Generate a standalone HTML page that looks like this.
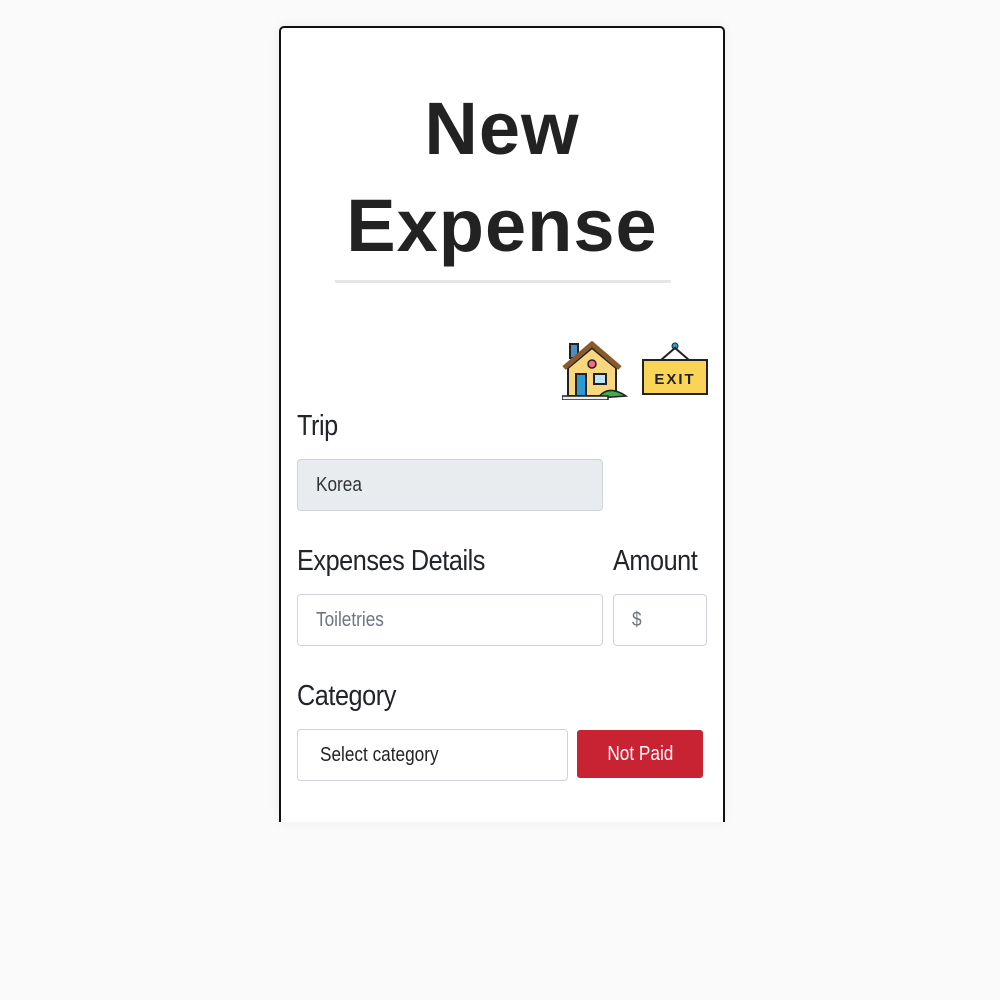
<!DOCTYPE html>
<html><head><style>
body{margin:0;background:#fafafa;width:1000px;height:1000px;position:relative;overflow:hidden;font-family:"Liberation Sans Narrow","Liberation Sans",sans-serif;color:#212529}
.card{position:absolute;left:279px;top:26px;width:442px;height:794px;background:#fff;border:2px solid #111;border-bottom:none;border-radius:5px 5px 0 0;box-shadow:0 0 12px rgba(0,0,0,.06)}
.t{position:absolute;left:0;width:100%;text-align:center;font-family:"Liberation Sans",sans-serif;font-weight:bold;font-size:74px;color:#222;letter-spacing:1px}
.hr{position:absolute;left:54px;width:336px;top:252px;height:3px;background:#e6e6e6}
.lab{position:absolute;font-size:29px;letter-spacing:-0.5px;transform:scaleX(.87);transform-origin:left;white-space:nowrap}
.in{position:absolute;box-sizing:border-box;border:1px solid #ced4da;border-radius:4px;font-size:20px;padding-left:18px;line-height:50px;height:52px;color:#6c757d}
.in span,.btn span{display:inline-block;transform:scaleX(.86);transform-origin:left;white-space:nowrap}
.btn{position:absolute;background:#c82333;color:#fff;border-radius:3px;font-size:20px;text-align:center;line-height:48px}
.btn span{transform-origin:center}
</style></head><body>
<div class="card">
<div class="t" style="top:58px">New</div>
<div class="t" style="top:155px">Expense</div>
<div class="hr"></div>
<svg style="position:absolute;left:281px;top:312px" width="66" height="60" viewBox="0 0 66 60">
<rect x="8" y="4" width="8" height="14" fill="#4a8fc0" stroke="#222" stroke-width="2"/>
<polygon points="6,28 30,8 54,28 54,56 6,56" fill="#f9d77e" stroke="#222" stroke-width="2"/>
<polyline points="2,28 30,4 58,28" fill="none" stroke="#8a5a2b" stroke-width="5"/>
<circle cx="30" cy="24" r="4" fill="#f06b8c" stroke="#222" stroke-width="1.5"/>
<rect x="14" y="34" width="10" height="22" fill="#2d9ad6" stroke="#222" stroke-width="2"/>
<rect x="32" y="34" width="12" height="10" fill="#bfe4f7" stroke="#222" stroke-width="2"/>
<path d="M36 58 Q46 44 64 56 Z" fill="#3fae49" stroke="#222" stroke-width="1.5"/>
<rect x="0" y="56" width="46" height="4" fill="#eee" stroke="#222" stroke-width="1.5"/>
</svg>
<svg style="position:absolute;left:360px;top:314px" width="68" height="56" viewBox="0 0 68 56">
<circle cx="34" cy="4" r="3" fill="#2d9ad6" stroke="#222"/>
<polyline points="20,18 34,6 48,18" fill="none" stroke="#222" stroke-width="2"/>
<rect x="2" y="18" width="64" height="34" fill="#f9d456" stroke="#222" stroke-width="2"/>
<text x="34" y="42" text-anchor="middle" font-family="Liberation Sans" font-weight="bold" font-size="15" letter-spacing="2" fill="#222">EXIT</text>
</svg>
<div class="lab" style="left:16px;top:382px">Trip</div>
<div class="in" style="left:16px;top:431px;width:306px;background:#e9ecef;color:#333"><span>Korea</span></div>
<div class="lab" style="left:16px;top:517px">Expenses Details</div>
<div class="lab" style="left:332px;top:517px">Amount</div>
<div class="in" style="left:16px;top:566px;width:306px"><span>Toiletries</span></div>
<div class="in" style="left:332px;top:566px;width:94px"><span>$</span></div>
<div class="lab" style="left:16px;top:652px">Category</div>
<div class="in" style="left:16px;top:701px;width:271px;color:#222;padding-left:22px"><span>Select category</span></div>
<div class="btn" style="left:296px;top:702px;width:126px"><span>Not Paid</span></div>
</div>
</body></html>
